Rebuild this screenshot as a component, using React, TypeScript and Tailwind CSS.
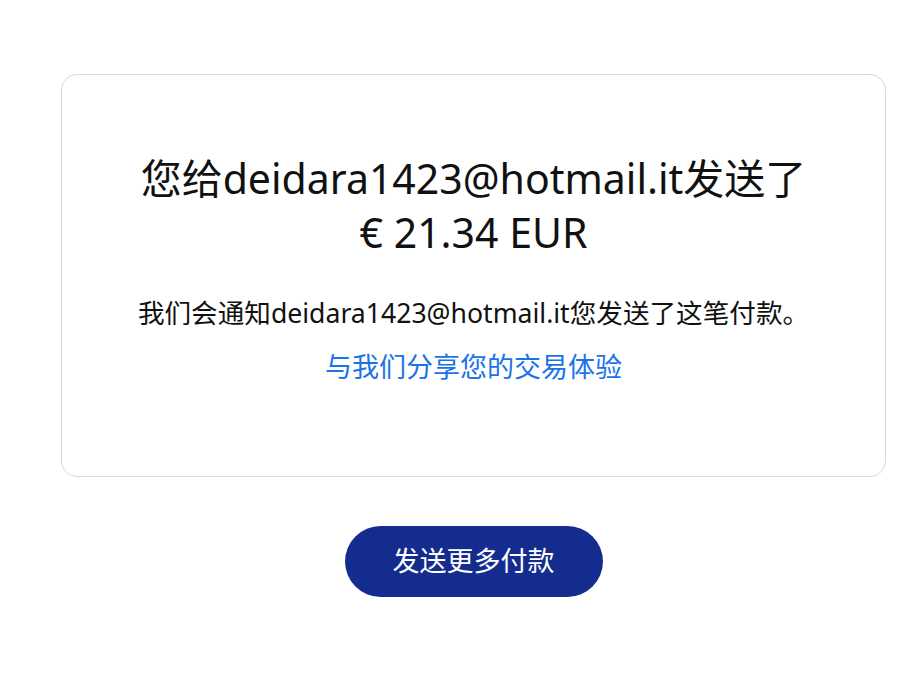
const font = "font-['Noto_Sans','Noto_Sans_CJK_SC',sans-serif]";

const App = () => {
  return (
    <div className={`min-h-screen bg-white pl-[61px] pr-[16px] pt-[74px] ${font}`}>
      <div className="flex flex-col items-center rounded-2xl border border-[#dcdad4] px-6 pt-[76px] pb-[89px] text-center">
        <h1 className="text-[41px] leading-[54px] text-[#111]">
          您给deidara1423@hotmail.it发送了
          <br />€ 21.34 EUR
        </h1>
        <p className="mt-[34px] text-[26.6px] leading-[40px] text-[#111]">
          我们会通知deidara1423@hotmail.it您发送了这笔付款。
        </p>
        <a href="#" className="mt-[14px] text-[27px] leading-[40px] text-[#1a73e8]">
          与我们分享您的交易体验
        </a>
      </div>
      <div className="flex justify-center pt-[49px]">
        <button className="h-[71px] w-[258px] rounded-full bg-[#142c8e] text-[27px] text-white">
          发送更多付款
        </button>
      </div>
    </div>
  );
};

export default App;
